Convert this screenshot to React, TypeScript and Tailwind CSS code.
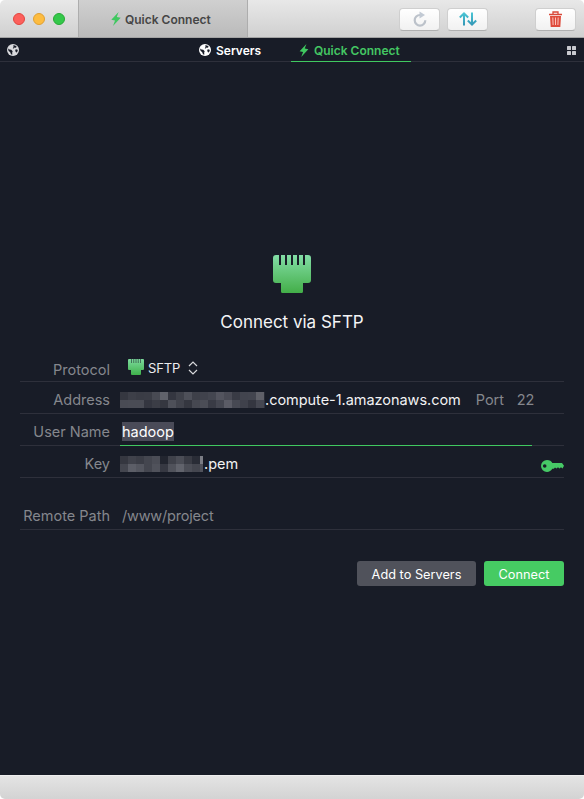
import React from "react";

const ADDRESS_MASK = [
  ["#353740", "#3d3f48", "#3a3c45", "#3b3d46", "#484a53", "#60626b", "#343640", "#3f414a", "#4e5059", "#3e4049", "#40424c", "#444650", "#53545e", "#4a4b55", "#393b45", "#42444e", "#43454f", "#5f6068"],
  ["#494b54", "#4a4c55", "#4a4c55", "#343640", "#3b3d46", "#353740", "#4e5059", "#41434c", "#353740", "#464851", "#4b4d56", "#393b45", "#454751", "#5b5c66", "#474953", "#3f414b", "#343640", "#454751"],
];
const KEY_MASK = [
  ["#353740", "#40424b", "#3b3d46", "#44464f", "#4b4d56", "#22252f", "#3f414a", "#4b4d56", "#393b44", "#292c36"],
  ["#44464f", "#5c5e67", "#54565f", "#44464f", "#50525b", "#363842", "#50525b", "#61636c", "#4c4e57", "#44464f"],
];

function Mask({ rows, tail }: { rows: string[][]; tail: string[] }) {
  return (
    <div className="flex flex-col">
      {rows.map((row, y) => (
        <div key={y} className="flex">
          {row.map((c, x) => (
            <div key={x} className="size-2" style={{ backgroundColor: c }} />
          ))}
          <div className={rows === KEY_MASK ? "h-2 w-[3px]" : "h-2 w-px"} style={{ backgroundColor: tail[y] }} />
        </div>
      ))}
    </div>
  );
}

function Bolt({ className }: { className: string }) {
  return (
    <svg viewBox="0 0 10 14" className={className} fill="#40c860">
      <path d="M7.600 0 .3 7.700l3.700.8L2 14l7.700-8.300-3.900-.8z" />
    </svg>
  );
}

function Globe({ className, fill }: { className: string; fill: string }) {
  return (
    <svg viewBox="0 0 12 12" className={className}>
      <circle cx="6" cy="6" r="6" fill={fill} />
      <path d="M1.100 4.600 2.500 5.400 4.300 5.700 5.700 7.200 5.200 8.600 5.300 10.700 4 10.300 3.200 8.300 1.500 6.700zM6.200 1.300l2 .3 1.500 1.200-.9.900-1.300-.2-.6 1-1.200-.3.900-1.300zM8.100 5.800l2-.5.7 1.300-.9 1.900-1.200-.6z" fill="#181c27" />
    </svg>
  );
}

function Plug({ className, id }: { className: string; id: string }) {
  return (
    <svg viewBox="0 0 38 38" className={className}>
      <defs>
        <linearGradient id={id} x2="0" y2="1">
          <stop stopColor="#83dda6" />
          <stop offset="1" stopColor="#43ae48" />
        </linearGradient>
      </defs>
      <path d="M3 0h3v10h2V0h4v10h2V0h4v10h2V0h4v10h2V0h4v10h2V0h3q3 0 3 3v22q0 3-3 3h-5v8.500q0 1.500-1.500 1.500h-19Q8 38 8 36.500V28H3q-3 0-3-3V3q0-3 3-3z" fill={`url(#${id})`} />
    </svg>
  );
}

/* At 16px the contacts read as short translucent notches. */
function SmallPlug({ className }: { className: string }) {
  return (
    <svg viewBox="0 0 16 16" className={className}>
      <defs>
        <linearGradient id="plug-small" x2="0" y2="1">
          <stop stopColor="#7ddb9e" />
          <stop offset="1" stopColor="#3fb14b" />
        </linearGradient>
      </defs>
      <path d="M1 0h14q1 0 1 1v9q0 1-1 1h-2v4q0 1-1 1H4q-1 0-1-1v-4H1q-1 0-1-1V1q0-1 1-1z" fill="url(#plug-small)" />
      <path d="M3.500 0v4M5.750 0v4M8 0v4M10.250 0v4M12.500 0v4" stroke="#181c27" strokeOpacity=".6" strokeWidth=".9" />
    </svg>
  );
}

function ToolButton({ children }: { children: React.ReactNode }) {
  return (
    <div className="flex h-[23px] w-[41px] items-center justify-center rounded-[4px] border border-[#cfcfcf] border-b-[#b0b0b0] bg-linear-to-b from-white to-[#f1f1f1]">
      {children}
    </div>
  );
}

const label = "w-[90px] shrink-0 text-right text-[14.500px] leading-5 text-[#85878d]";
const value = "pt-px text-[14.500px] leading-5";
const row = "flex h-8 items-center border-b border-[#2e303b] pt-1";

export default function App() {
  return (
    <div className="flex h-[799px] w-[584px] flex-col overflow-hidden bg-white font-['Inter','Liberation_Sans',sans-serif] whitespace-nowrap">
      <header className="flex h-[38px] shrink-0 rounded-t-[5px] border-b border-[#a3a3a3] bg-linear-to-b from-[#e8e8e8] to-[#d0d0d0]">
        <div className="flex w-[78px] items-center gap-2 pt-px pl-[13px]">
          <div className="size-3 rounded-full border border-[#e2463f] bg-[#fc605c]" />
          <div className="size-3 rounded-full border border-[#dfa033] bg-[#fdbc40]" />
          <div className="size-3 rounded-full border border-[#27aa35] bg-[#34c84a]" />
        </div>
        <div className="flex w-[170px] items-center border-x border-[#adadad] bg-linear-to-b from-[#d0d0d0] to-[#bababa] pt-px pl-8">
          <Bolt className="h-[14px] w-[10px]" />
          <span className="pt-px pl-1 text-[12px] font-semibold text-[#464646]">Quick Connect</span>
        </div>
        <div className="flex grow items-center pt-px pl-[151px]">
          <ToolButton>
            <svg viewBox="0 0 14 16" className="h-4 w-[14px]">
              <path d="M7 4A5.300 5.300 0 1 0 12.300 9.300" fill="none" stroke="#bcc2ca" strokeWidth="2.200" />
              <path d="M6.500 .5 12 4 6.500 7.500z" fill="#c2cad4" />
            </svg>
          </ToolButton>
          <div className="ml-[7px]">
            <ToolButton>
              <svg viewBox="0 0 18 14" className="h-[14px] w-[18px]" fill="none" strokeWidth="2">
                <defs>
                  <linearGradient id="arrows" gradientUnits="userSpaceOnUse" x1="0" y1="0" x2="0" y2="14">
                    <stop stopColor="#4cc8d6" />
                    <stop offset="1" stopColor="#3294b4" />
                  </linearGradient>
                </defs>
                <path d="M5 13.500V2M.8 5.500 5 1.500l4.200 4M13.001 .5V12M8.800 8.500l4.200 4 4.200-4" stroke="url(#arrows)" />
              </svg>
            </ToolButton>
          </div>
          <div className="ml-[47px]">
            <ToolButton>
              <svg viewBox="0 0 13 16" className="h-4 w-[13px]">
                <path d="M4 3V1h5v2M0 3.500h13" fill="none" stroke="#d94838" strokeWidth="1.300" />
                <path d="M1 5h11l-.7 11H1.700z" fill="#df4c3c" />
                <path d="M3.800 6.500l.3 7.500M6.500 6.500V14M9.200 6.500 8.900 14" stroke="#ffd0ca" strokeWidth=".9" />
              </svg>
            </ToolButton>
          </div>
        </div>
      </header>

      <main className="flex grow flex-col bg-[#181c27]">
        <nav className="flex h-6 shrink-0 border-b border-[#2e303b] text-[12px] font-semibold">
          <div className="flex w-[199px] items-center pt-px pl-[7px]">
            <Globe className="size-3" fill="#d9dadd" />
          </div>
          <div className="flex w-[92px] items-center gap-[5px] pt-px text-white">
            <Globe className="size-3" fill="#ffffff" />
            <span className="pt-px">Servers</span>
          </div>
          <div className="flex h-6 w-[120px] items-center border-b border-[#40c860] pt-px pl-2 text-[#44c663]">
            <Bolt className="h-[13px] w-[10px]" />
            <span className="pt-px pl-[5px]">Quick Connect</span>
          </div>
          <div className="flex grow items-center justify-end pt-px pr-2">
            <div className="grid grid-cols-2 gap-px">
              {[0, 1, 2, 3].map((i) => (
                <div key={i} className="size-1 rounded-[0.5px] bg-[#c9cacf]" />
              ))}
            </div>
          </div>
        </nav>

        <div className="flex flex-col items-center pt-[193px]">
          <Plug className="h-[38px] w-[38px]" id="plug-large" />
          <h1 className="mt-[17px] text-[17px] leading-6 text-[#f4f4f5]">Connect via SFTP</h1>
        </div>

        <section className="mx-5 mt-4">
          <div className={row}>
            <span className={label + " pt-[5px]"}>Protocol</span>
            <SmallPlug className="-mt-0.5 ml-[18px] size-4" />
            <span className="pt-0.5 pl-1 text-[13px] tracking-[-0.1px] text-[#ececee]">SFTP</span>
            <svg viewBox="0 0 10 14" className="ml-[7.500px] h-[14px] w-[10px]" fill="none" stroke="#d7d8db" strokeWidth="1.200">
              <path d="M1 5 5 1l4 4M1 9l4 4 4-4" />
            </svg>
          </div>
          <div className={row}>
            <span className={label}>Address</span>
            <div className="ml-[10px]">
              <Mask rows={ADDRESS_MASK} tail={["#282b35", "#30323c"]} />
            </div>
            <span className={value + " tracking-[-0.04px] text-[#f2f2f3]"}>.compute-1.amazonaws.com</span>
            <span className={value + " w-[41px] pl-[15px] text-[#85878d]"}>Port</span>
            <span className={value + " ml-[15px] text-[#85878d]"}>22</span>
          </div>
          <div className="flex h-8">
            <div className="flex w-[100px] items-center border-b border-[#2e303b] pt-1">
              <span className={label}>User Name</span>
            </div>
            <div className="flex w-[412px] items-center border-b border-[#40c860] pt-1 pl-0.5">
              <span className="h-[19px] w-[52px] bg-[#4a4b58] text-[14.500px] leading-5 text-white">hadoop</span>
            </div>
            <div className="grow border-b border-[#2e303b]" />
          </div>
          <div className={row}>
            <span className={label}>Key</span>
            <div className="ml-[10px]">
              <Mask rows={KEY_MASK} tail={["#7b7d85", "#50525b"]} />
            </div>
            <span className={value + " pl-px text-[#f2f2f3]"}>.pem</span>
            <svg viewBox="0 0 23 12" className="mt-1 ml-auto h-3 w-[23px]">
              <path fillRule="evenodd" d="M6 0c2.500 0 4.500 1.200 5.300 3H21l2 2.800L21.500 8.500 20 7.200 18.500 8.500 17 7.300 15.500 8.500 14 7.500 12.800 8.800H11.300C10.300 10.800 8.300 12 6 12a6 6 0 0 1 0-12zM3.700 4.200a1.800 1.800 0 1 0 .01 3.600 1.800 1.800 0 0 0 0-3.600z" fill="#46c966" />
            </svg>
          </div>
          <div className={row + " mt-5"}>
            <span className={label}>Remote Path</span>
            <span className={value + " ml-3 tracking-[-0.2px] text-[#85878d]"}>/www/project</span>
          </div>
        </section>

        <div className="mt-[31px] flex justify-end gap-2 pr-5 text-[12.750px] text-white">
          <button className="h-[25px] w-[119px] rounded-[3px] bg-[#50525b] pt-[3px]">Add to Servers</button>
          <button className="h-[25px] w-20 rounded-[3px] bg-[#46cb63] pt-[3px]">Connect</button>
        </div>
      </main>

      <footer className="h-6 shrink-0 rounded-b-[5px] border-t border-[#eeeeee] bg-linear-to-b from-[#e4e4e4] to-[#d3d3d3]" />
    </div>
  );
}
